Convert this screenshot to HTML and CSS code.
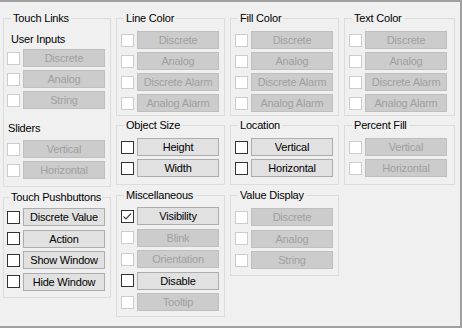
FILE: index.html
```html
<!DOCTYPE html>
<html lang="en">
<head>
  <meta charset="UTF-8" />
  <title>Animation Links</title>
  <link rel="stylesheet" href="styles.css">
</head>
<body>
  <div class="dialog">

    <div class="col">
      <fieldset class="group links">
        <legend>Touch Links</legend>
        <div class="label">User Inputs</div>
        <div class="rows">
          <div class="opt off"><span class="chk"></span><span class="btn">Discrete</span></div>
          <div class="opt off"><span class="chk"></span><span class="btn">Analog</span></div>
          <div class="opt off"><span class="chk"></span><span class="btn">String</span></div>
        </div>
        <div class="label sliders">Sliders</div>
        <div class="rows">
          <div class="opt off"><span class="chk"></span><span class="btn">Vertical</span></div>
          <div class="opt off"><span class="chk"></span><span class="btn">Horizontal</span></div>
        </div>
      </fieldset>

      <fieldset class="group push">
        <legend>Touch Pushbuttons</legend>
        <div class="rows loose">
          <div class="opt"><span class="chk"></span><span class="btn">Discrete Value</span></div>
          <div class="opt"><span class="chk"></span><span class="btn">Action</span></div>
          <div class="opt"><span class="chk"></span><span class="btn">Show Window</span></div>
          <div class="opt"><span class="chk"></span><span class="btn">Hide Window</span></div>
        </div>
      </fieldset>
    </div>

    <div class="col">
      <fieldset class="group color">
        <legend>Line Color</legend>
        <div class="rows">
          <div class="opt off"><span class="chk"></span><span class="btn">Discrete</span></div>
          <div class="opt off"><span class="chk"></span><span class="btn">Analog</span></div>
          <div class="opt off"><span class="chk"></span><span class="btn">Discrete Alarm</span></div>
          <div class="opt off"><span class="chk"></span><span class="btn">Analog Alarm</span></div>
        </div>
      </fieldset>

      <fieldset class="group pair">
        <legend>Object Size</legend>
        <div class="rows">
          <div class="opt"><span class="chk"></span><span class="btn">Height</span></div>
          <div class="opt"><span class="chk"></span><span class="btn">Width</span></div>
        </div>
      </fieldset>

      <fieldset class="group misc">
        <legend>Miscellaneous</legend>
        <div class="rows loose">
          <div class="opt">
            <span class="chk">
              <svg width="11" height="11" viewBox="0 0 11 11"><polyline points="1.5,5.5 4,8 9,2.5" fill="none" stroke="#444" stroke-width="1.2" /></svg>
            </span>
            <span class="btn">Visibility</span>
          </div>
          <div class="opt off"><span class="chk"></span><span class="btn">Blink</span></div>
          <div class="opt off"><span class="chk"></span><span class="btn">Orientation</span></div>
          <div class="opt"><span class="chk"></span><span class="btn">Disable</span></div>
          <div class="opt off"><span class="chk"></span><span class="btn">Tooltip</span></div>
        </div>
      </fieldset>
    </div>

    <div class="col">
      <fieldset class="group color">
        <legend>Fill Color</legend>
        <div class="rows">
          <div class="opt off"><span class="chk"></span><span class="btn">Discrete</span></div>
          <div class="opt off"><span class="chk"></span><span class="btn">Analog</span></div>
          <div class="opt off"><span class="chk"></span><span class="btn">Discrete Alarm</span></div>
          <div class="opt off"><span class="chk"></span><span class="btn">Analog Alarm</span></div>
        </div>
      </fieldset>

      <fieldset class="group pair">
        <legend>Location</legend>
        <div class="rows">
          <div class="opt"><span class="chk"></span><span class="btn">Vertical</span></div>
          <div class="opt"><span class="chk"></span><span class="btn">Horizontal</span></div>
        </div>
      </fieldset>

      <fieldset class="group value">
        <legend>Value Display</legend>
        <div class="rows loose">
          <div class="opt off"><span class="chk"></span><span class="btn">Discrete</span></div>
          <div class="opt off"><span class="chk"></span><span class="btn">Analog</span></div>
          <div class="opt off"><span class="chk"></span><span class="btn">String</span></div>
        </div>
      </fieldset>
    </div>

    <div class="col">
      <fieldset class="group color">
        <legend>Text Color</legend>
        <div class="rows">
          <div class="opt off"><span class="chk"></span><span class="btn">Discrete</span></div>
          <div class="opt off"><span class="chk"></span><span class="btn">Analog</span></div>
          <div class="opt off"><span class="chk"></span><span class="btn">Discrete Alarm</span></div>
          <div class="opt off"><span class="chk"></span><span class="btn">Analog Alarm</span></div>
        </div>
      </fieldset>

      <fieldset class="group pair">
        <legend>Percent Fill</legend>
        <div class="rows">
          <div class="opt off"><span class="chk"></span><span class="btn">Vertical</span></div>
          <div class="opt off"><span class="chk"></span><span class="btn">Horizontal</span></div>
        </div>
      </fieldset>
    </div>

  </div>
</body>
</html>
```

FILE: styles.css
```css
:root {
  --bg: #f0f0f0;
  --frame: #a0a0a0;
  --group-line: #dcdcdc;
  --btn-bg: #e1e1e1;
  --btn-border: #adadad;
  --off-bg: #cccccc;
  --off-border: #bfbfbf;
  --off-text: #a0a0a0;
}

* {
  box-sizing: border-box;
}

body {
  margin: 0;
  background: var(--bg);
  color: #000;
  font-family: "Liberation Sans", Arial, sans-serif;
  font-size: 11px;
  line-height: 13px;
  letter-spacing: -0.2px;
}

.dialog {
  width: 462px;
  height: 328px;
  border-top: 2px solid var(--frame);
  border-right: 2px solid var(--frame);
  border-bottom: 2px solid var(--frame);
  padding: 10px 0 0 3px;
  display: grid;
  grid-template-columns: 108px 109px 109px 111px;
  column-gap: 5px;
  align-items: start;
}

.col {
  display: flex;
  flex-direction: column;
}

/* group boxes */
.group {
  margin: 0;
  min-width: 0;
  border: 1px solid var(--group-line);
  padding: 6px 0 3px 4px;
}

.group legend {
  padding: 0 2px;
  margin-left: 3px;
  line-height: 13px;
  white-space: nowrap;
}

.group.links {
  padding: 8px 0 7px 3px;
}

.group.links legend {
  margin-left: 4px;
}

.group.push {
  margin-top: 4px;
  padding: 4px 0 6px 3px;
}

.group.push legend {
  margin-left: 3px;
  padding: 0 1px;
}

.group.pair {
  margin-top: 3px;
  padding: 6px 0 7px 4px;
}

.group.misc {
  margin-top: 4px;
  padding: 5px 0 5px 4px;
}

.group.value {
  margin-top: 4px;
  padding: 6px 0 6px 4px;
}

.label {
  padding-left: 4px;
  margin-bottom: 3px;
}

.label.sliders {
  padding-left: 1px;
  margin-top: 13px;
  margin-bottom: 5px;
}

/* checkbox + button rows */
.rows {
  display: flex;
  flex-direction: column;
  gap: 3px;
}

.rows.loose {
  gap: 3.5px;
}

.opt {
  display: flex;
  align-items: center;
  gap: 3px;
}

.chk {
  width: 13px;
  height: 13px;
  flex: none;
  background: #fff;
  border: 1px solid #333;
  display: flex;
}

.btn {
  width: 82px;
  height: 18px;
  flex: none;
  background: var(--btn-bg);
  border: 1px solid var(--btn-border);
  text-align: center;
  line-height: 16px;
  white-space: nowrap;
}

.opt.off .chk {
  border-color: var(--off-bg);
}

.opt.off .btn {
  background: var(--off-bg);
  border-color: var(--off-border);
  color: var(--off-text);
}
```
